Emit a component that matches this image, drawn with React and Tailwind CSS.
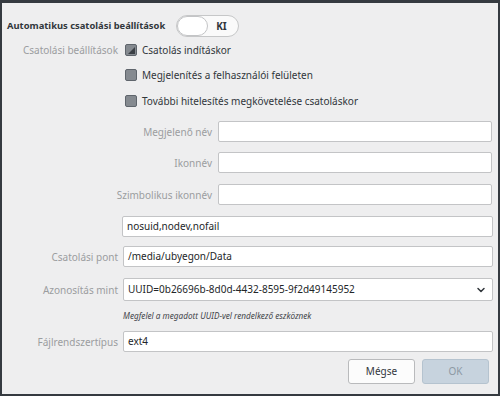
import React from "react";
import { ChevronDown } from "lucide-react";

const Checkbox = ({ partial }) => (
  <div className="w-[12px] h-[12px] rounded-[2px] border border-[#5f656c] bg-[#858a90] flex items-end justify-end overflow-hidden">
    {partial && (
      <svg width="10" height="10" viewBox="0 0 10 10">
        <polygon points="9,2 9,9 2,9" fill="#3a3f45" />
      </svg>
    )}
  </div>
);

const CheckRow = ({ label, partial, className }) => (
  <div className={"flex items-center h-[16px] pl-[2px] " + className}>
    <Checkbox partial={partial} />
    <span className="ml-[5px] text-[#31363b] whitespace-nowrap">{label}</span>
  </div>
);

const Field = ({ value, className }) => (
  <div
    className={
      "h-[21px] bg-white border border-[#c3c4c6] rounded-[2px] flex items-center px-[4px] text-[#232629] " +
      className
    }
  >
    {value}
  </div>
);

const Label = ({ children }) => (
  <div className="text-right text-[#9b9d9f] leading-none whitespace-nowrap">{children}</div>
);

const App = () => {
  return (
    <div
      className="w-[500px] h-[396px] bg-[#eeeeef] border-t-[3px] border-x-2 border-b-2 border-[#353a40] text-[10px] overflow-hidden"
      style={{ fontFamily: '"Noto Sans", sans-serif' }}
    >
      {/* header */}
      <div className="flex items-center h-[22px] mt-[12px] pl-[5px]">
        <span className="font-bold text-[9.4px] text-[#31363b] whitespace-nowrap">
          Automatikus csatolási beállítások
        </span>
        <div className="ml-[11px] w-[63px] h-[22px] rounded-full border border-[#c6c7c8] bg-[#fafafa] flex items-center">
          <div className="w-[31px] h-[20px] rounded-full border border-[#c3c4c6] bg-white"></div>
          <span className="ml-[8px] font-bold text-[10px] text-[#31363b]">KI</span>
        </div>
      </div>

      <div className="grid grid-cols-[116px_370px] gap-x-[5px]">
        <div className="mt-[5px] h-[16px] flex items-center justify-end">
          <Label>Csatolási beállítások</Label>
        </div>
        <CheckRow className="mt-[5px]" label="Csatolás indításkor" partial />

        <div></div>
        <CheckRow className="mt-[9px]" label="Megjelenítés a felhasználói felületen" />

        <div></div>
        <CheckRow className="mt-[10px]" label="További hitelesítés megkövetelése csatoláskor" />

        <div></div>
        <div className="grid grid-cols-[90px_274px] gap-x-[6px] mt-[12px] -ml-[1px]">
          <div className="h-[21px] flex items-center justify-end">
            <Label>Megjelenő név</Label>
          </div>
          <Field value="" />
          <div className="h-[21px] mt-[10px] flex items-center justify-end">
            <Label>Ikonnév</Label>
          </div>
          <Field className="mt-[10px]" value="" />
          <div className="h-[21px] mt-[11px] flex items-center justify-end">
            <Label>Szimbolikus ikonnév</Label>
          </div>
          <Field className="mt-[11px]" value="" />
        </div>

        <div></div>
        <Field className="mt-[11px] -ml-[1px]" value="nosuid,nodev,nofail" />

        <div className="mt-[9px] h-[21px] flex items-center justify-end">
          <Label>Csatolási pont</Label>
        </div>
        <Field className="mt-[9px]" value="/media/ubyegon/Data" />

        <div className="mt-[11px] h-[23px] flex items-center justify-end">
          <Label>Azonosítás mint</Label>
        </div>
        <div className="mt-[11px] h-[23px] bg-white border border-[#c3c4c6] rounded-[2px] flex items-center justify-between px-[4px] text-[#232629]">
          <span>UUID=0b26696b-8d0d-4432-8595-9f2d49145952</span>
          <ChevronDown size={12} strokeWidth={3} color="#31363b" className="mr-[1px]" />
        </div>

        <div></div>
        <div className="mt-[9px] h-[12px] flex items-center italic text-[8.2px] text-[#3f4449] whitespace-nowrap">
          Megfelel a megadott UUID-vel rendelkező eszköznek
        </div>

        <div className="mt-[9px] h-[21px] flex items-center justify-end">
          <Label>Fájlrendszertípus</Label>
        </div>
        <Field className="mt-[9px]" value="ext4" />
      </div>

      <div className="flex justify-end gap-[7px] mt-[7px] pr-[9px]">
        <button className="w-[67px] h-[25px] bg-[#fcfcfc] border border-[#b9babc] rounded-[3px] text-[#31363b]">
          Mégse
        </button>
        <button className="w-[67px] h-[25px] bg-[#c7d3de] border border-[#b5c3cf] rounded-[3px] text-[#8d99a4]">
          OK
        </button>
      </div>
    </div>
  );
};

export default App;
